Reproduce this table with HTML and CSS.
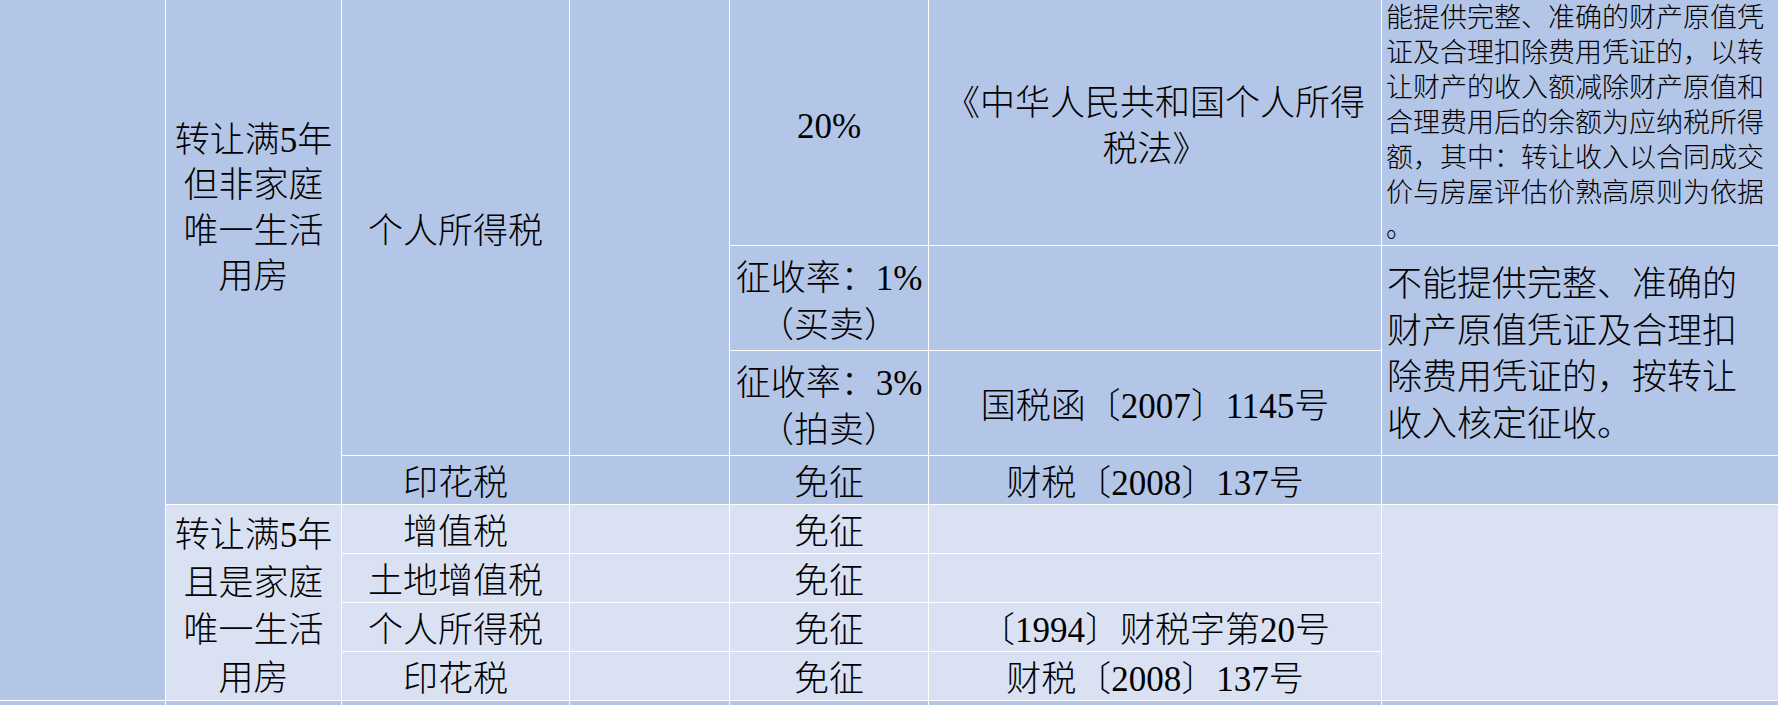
FILE: index.html
```html
<!DOCTYPE html>
<html lang="zh-CN">
<head>
<meta charset="utf-8">
<title>税费表</title>
<link rel="stylesheet" href="styles.css">
</head>
<body>
<div class="sheet">
  <!-- hidden row above the viewport -->
  <div class="c dk rs9"></div>
  <div class="c dk rs5 upper">转让满5年<br>但非家庭<br>唯一生活<br>用房</div>
  <div class="c dk"></div>
  <div class="c dk"></div>
  <div class="c dk"></div>
  <div class="c dk"></div>
  <div class="c dk"></div>

  <div class="c dk rs3">个人所得税</div>
  <div class="c dk rs3"></div>
  <div class="c dk">20%</div>
  <div class="c dk">《中华人民共和国个人所得<br>税法》</div>
  <div class="c dk left note">能提供完整、准确的财产原值凭<br>证及合理扣除费用凭证的，以转<br>让财产的收入额减除财产原值和<br>合理费用后的余额为应纳税所得<br>额，其中：转让收入以合同成交<br>价与房屋评估价熟高原则为依据<br>。</div>

  <div class="c dk">征收率：1%<br>（买卖）</div>
  <div class="c dk"></div>
  <div class="c dk left rs2">不能提供完整、准确的<br>财产原值凭证及合理扣<br>除费用凭证的，按转让<br>收入核定征收。</div>

  <div class="c dk">征收率：3%<br>（拍卖）</div>
  <div class="c dk">国税函〔2007〕1145号</div>

  <div class="c dk">印花税</div>
  <div class="c dk"></div>
  <div class="c dk">免征</div>
  <div class="c dk">财税〔2008〕137号</div>
  <div class="c dk"></div>

  <div class="c lt rs4 tall">转让满5年<br>且是家庭<br>唯一生活<br>用房</div>
  <div class="c lt">增值税</div>
  <div class="c lt"></div>
  <div class="c lt">免征</div>
  <div class="c lt"></div>
  <div class="c lt rs4"></div>

  <div class="c lt">土地增值税</div>
  <div class="c lt"></div>
  <div class="c lt">免征</div>
  <div class="c lt"></div>

  <div class="c lt">个人所得税</div>
  <div class="c lt"></div>
  <div class="c lt">免征</div>
  <div class="c lt">〔1994〕财税字第20号</div>

  <div class="c lt">印花税</div>
  <div class="c lt"></div>
  <div class="c lt">免征</div>
  <div class="c lt">财税〔2008〕137号</div>

  <div class="c dk"></div>
  <div class="c dk"></div>
  <div class="c dk"></div>
  <div class="c dk"></div>
  <div class="c dk"></div>
  <div class="c dk"></div>
  <div class="c dk"></div>
</div>
</body>
</html>
```

FILE: styles.css
```css
* { box-sizing: border-box; }

html, body {
  margin: 0;
  background: #ffffff;
  overflow: hidden;
}

.sheet {
  display: grid;
  grid-template-columns: 165px 175px 227px 159px 198px 452px 396px;
  grid-template-rows: 89px 245px 104px 104px 48px 48px 48px 48px 48px 48px;
  gap: 1px;
  background: #ffffff;
  margin-top: -90px;
  font-family: "Liberation Serif", "Noto Sans CJK SC", serif;
  font-weight: 300;
  font-size: 35px;
  line-height: 46.5px;
  color: #000000;
}

.c {
  display: flex;
  align-items: center;
  justify-content: center;
  text-align: center;
  white-space: nowrap;
  overflow: hidden;
  padding-top: 9px;
}

.dk { background: #b4c6e7; }
.lt { background: #d9e1f2; }

.left {
  justify-content: flex-start;
  text-align: left;
  padding-left: 5px;
}

.note {
  font-size: 27px;
  line-height: 35px;
  padding-left: 4px;
  padding-top: 2px;
}

.upper { padding-top: 3px; line-height: 45.5px; }
.tall { line-height: 47.5px; }

.rs2 { grid-row: span 2; }
.rs3 { grid-row: span 3; }
.rs4 { grid-row: span 4; }
.rs5 { grid-row: span 5; }
.rs9 { grid-row: span 9; }
```
